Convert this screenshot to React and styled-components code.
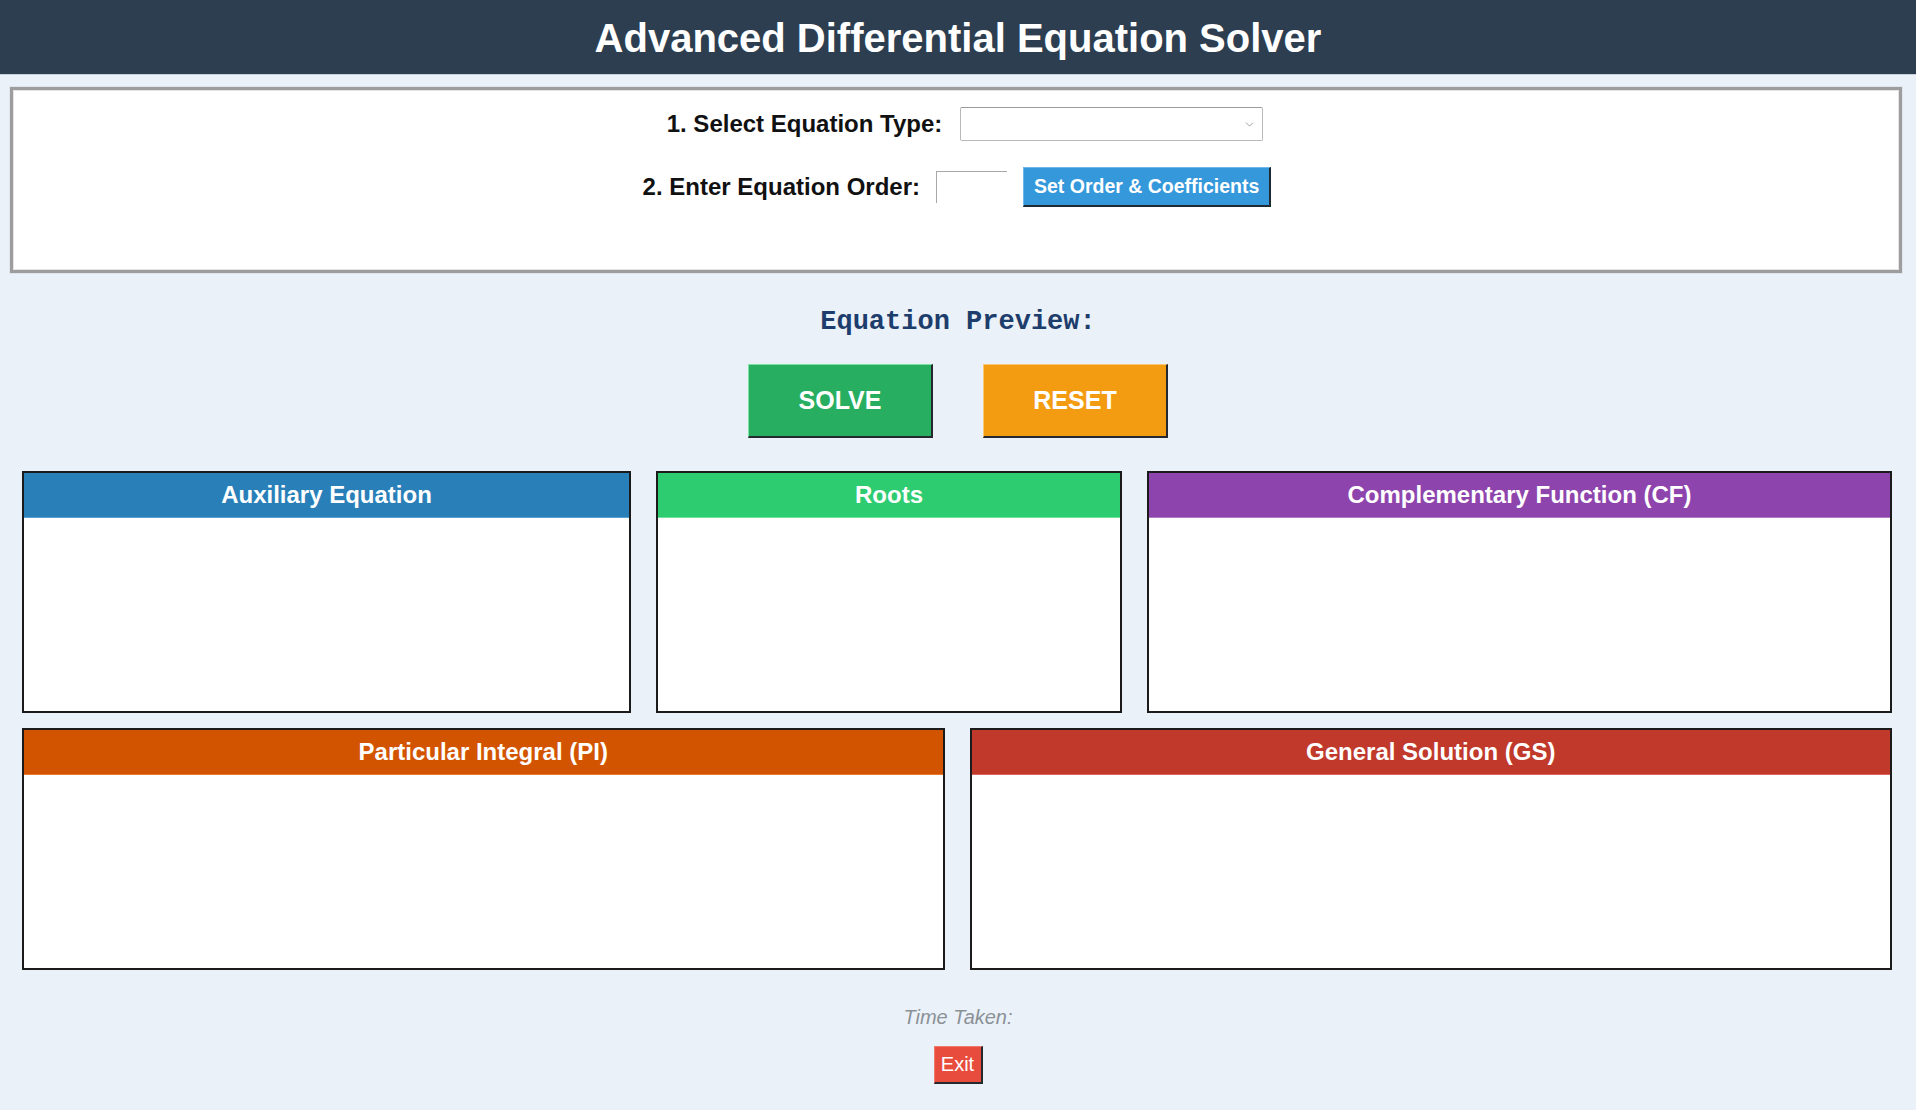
import React, { useState } from "react";
import styled, { createGlobalStyle } from "styled-components";
import { ChevronDown } from "lucide-react";

const GlobalStyle = createGlobalStyle`
  html, body {
    margin: 0;
    padding: 0;
    background: #eaf1f8;
    font-family: "Liberation Sans", Arial, sans-serif;
  }
  * { box-sizing: border-box; }
`;

const Page = styled.div`
  min-height: 1110px;
  background: #eaf1f8;
  display: flex;
  flex-direction: column;
`;

const Header = styled.header`
  height: 75px;
  background: #2c3e50;
  display: flex;
  align-items: center;
  justify-content: center;
  border-bottom: 1px solid #c8d1da;
`;

const Title = styled.h1`
  margin: 2px 0 0;
  color: #ffffff;
  font-size: 40px;
  font-weight: bold;
`;

const ControlPanel = styled.section`
  margin: 12px 14px 0 10px;
  height: 186px;
  background: #ffffff;
  border: 3px solid #9d9d9d;
  box-shadow: inset 1px 1px 0 #e4e4e4, inset -1px -1px 0 #e4e4e4, 0 0 0 1px #dfe5ec;
  padding-top: 17px;
  display: flex;
  flex-direction: column;
  align-items: center;
  gap: 26px;
`;

const FormRow = styled.div`
  display: flex;
  align-items: center;
  justify-content: center;
  gap: ${(p) => p.$gap || 16}px;
  height: ${(p) => p.$h}px;
  padding-left: ${(p) => p.$shift || 0}px;
`;

const Label = styled.label`
  font-size: 24px;
  font-weight: bold;
  color: #111;
`;

const SelectBox = styled.div`
  width: 303px;
  height: 34px;
  background: #fff;
  border: 1px solid #b9b9b9;
  border-top-color: #9a9a9a;
  border-radius: 2px;
  display: flex;
  align-items: center;
  justify-content: flex-end;
  padding-right: 6px;
  color: #8a8a8a;
`;

const OrderInput = styled.input`
  width: 71px;
  height: 32px;
  border: none;
  border-top: 1px solid #a8a8a8;
  border-left: 1px solid #a8a8a8;
  background: #fff;
  font-size: 18px;
  outline: none;
`;

const SmallButton = styled.button`
  height: 40px;
  padding: 0 10px;
  background: #3498db;
  color: #fff;
  font-family: "Liberation Sans", Arial, sans-serif;
  font-size: 19.5px;
  font-weight: bold;
  border: none;
  border-top: 1px solid #6fb7e8;
  border-left: 1px solid #6fb7e8;
  border-right: 2px solid #1f2a33;
  border-bottom: 2px solid #1f2a33;
  cursor: pointer;
`;

const Preview = styled.div`
  margin-top: 33px;
  text-align: center;
  font-family: "Liberation Mono", "Courier New", monospace;
  font-weight: bold;
  font-size: 27px;
  line-height: 32px;
  color: #1d3d6c;
`;

const ActionRow = styled.div`
  margin-top: 26px;
  display: flex;
  justify-content: center;
  gap: 50px;
`;

const BigButton = styled.button`
  width: 185px;
  height: 74px;
  background: ${(p) => p.$bg};
  color: #fff;
  font-family: "Liberation Sans", Arial, sans-serif;
  font-size: 25px;
  font-weight: bold;
  border: none;
  border-top: 1px solid ${(p) => p.$light};
  border-left: 1px solid ${(p) => p.$light};
  border-right: 2px solid #23292e;
  border-bottom: 2px solid #23292e;
  cursor: pointer;
`;

const ResultStack = styled.div`
  margin-top: 33px;
  display: flex;
  flex-direction: column;
  gap: 15px;
`;

const ResultGrid = styled.div`
  margin: 0 24px 0 22px;
  display: grid;
  grid-template-columns: ${(p) => p.$cols};
  column-gap: 25px;
`;

const ResultCard = styled.div`
  height: 242px;
  background: #fff;
  border: 2px solid #1b1b1b;
  display: flex;
  flex-direction: column;
`;

const CardHeader = styled.div`
  height: 45px;
  background: ${(p) => p.$bg};
  border-bottom: 1px solid ${(p) => p.$line};
  display: flex;
  align-items: center;
  justify-content: center;
  color: #fff;
  font-size: 24px;
  font-weight: bold;
`;

const CardBody = styled.div`
  flex: 1;
`;

const TimeTaken = styled.div`
  margin-top: 35px;
  text-align: center;
  font-style: italic;
  font-size: 20px;
  line-height: 24px;
  color: #8b9197;
`;

const ExitRow = styled.div`
  margin-top: 17px;
  display: flex;
  justify-content: center;
`;

const ExitButton = styled.button`
  width: 49px;
  height: 38px;
  padding: 0;
  background: #e74c3c;
  color: #fff;
  font-family: "Liberation Sans", Arial, sans-serif;
  font-size: 20px;
  border: none;
  border-top: 1px solid #f07a6d;
  border-left: 1px solid #f07a6d;
  border-right: 2px solid #23292e;
  border-bottom: 2px solid #23292e;
  cursor: pointer;
`;

const topCards = [
  { title: "Auxiliary Equation", bg: "#2980b9", line: "#5aa2d4" },
  { title: "Roots", bg: "#2ecc71", line: "#6fe09f" },
  { title: "Complementary Function (CF)", bg: "#8e44ad", line: "#b07ac6" },
];

const bottomCards = [
  { title: "Particular Integral (PI)", bg: "#d35400", line: "#ea7a33" },
  { title: "General Solution (GS)", bg: "#c0392b", line: "#d9675b" },
];

const Card = ({ title, bg, line }) => (
  <ResultCard>
    <CardHeader $bg={bg} $line={line}>{title}</CardHeader>
    <CardBody />
  </ResultCard>
);

const App = () => {
  const [order, setOrder] = useState("");

  return (
    <Page>
      <GlobalStyle />
      <Header>
        <Title>Advanced Differential Equation Solver</Title>
      </Header>

      <ControlPanel>
        <FormRow $h={34} $gap={18} $shift={18}>
          <Label>1. Select Equation Type:</Label>
          <SelectBox>
            <ChevronDown size={13} strokeWidth={1.5} />
          </SelectBox>
        </FormRow>
        <FormRow $h={40} $gap={16} $shift={2}>
          <Label>2. Enter Equation Order:</Label>
          <OrderInput value={order} onChange={(e) => setOrder(e.target.value)} />
          <SmallButton>Set Order &amp; Coefficients</SmallButton>
        </FormRow>
      </ControlPanel>

      <Preview>Equation Preview:</Preview>

      <ActionRow>
        <BigButton $bg="#27ae60" $light="#7fe0a6">SOLVE</BigButton>
        <BigButton $bg="#f39c12" $light="#f8c877">RESET</BigButton>
      </ActionRow>

      <ResultStack>
        <ResultGrid $cols="609fr 466fr 745fr">
          {topCards.map((c) => (
            <Card key={c.title} {...c} />
          ))}
        </ResultGrid>
        <ResultGrid $cols="1fr 1fr">
          {bottomCards.map((c) => (
            <Card key={c.title} {...c} />
          ))}
        </ResultGrid>
      </ResultStack>

      <TimeTaken>Time Taken:</TimeTaken>
      <ExitRow>
        <ExitButton>Exit</ExitButton>
      </ExitRow>
    </Page>
  );
};

export default App;
